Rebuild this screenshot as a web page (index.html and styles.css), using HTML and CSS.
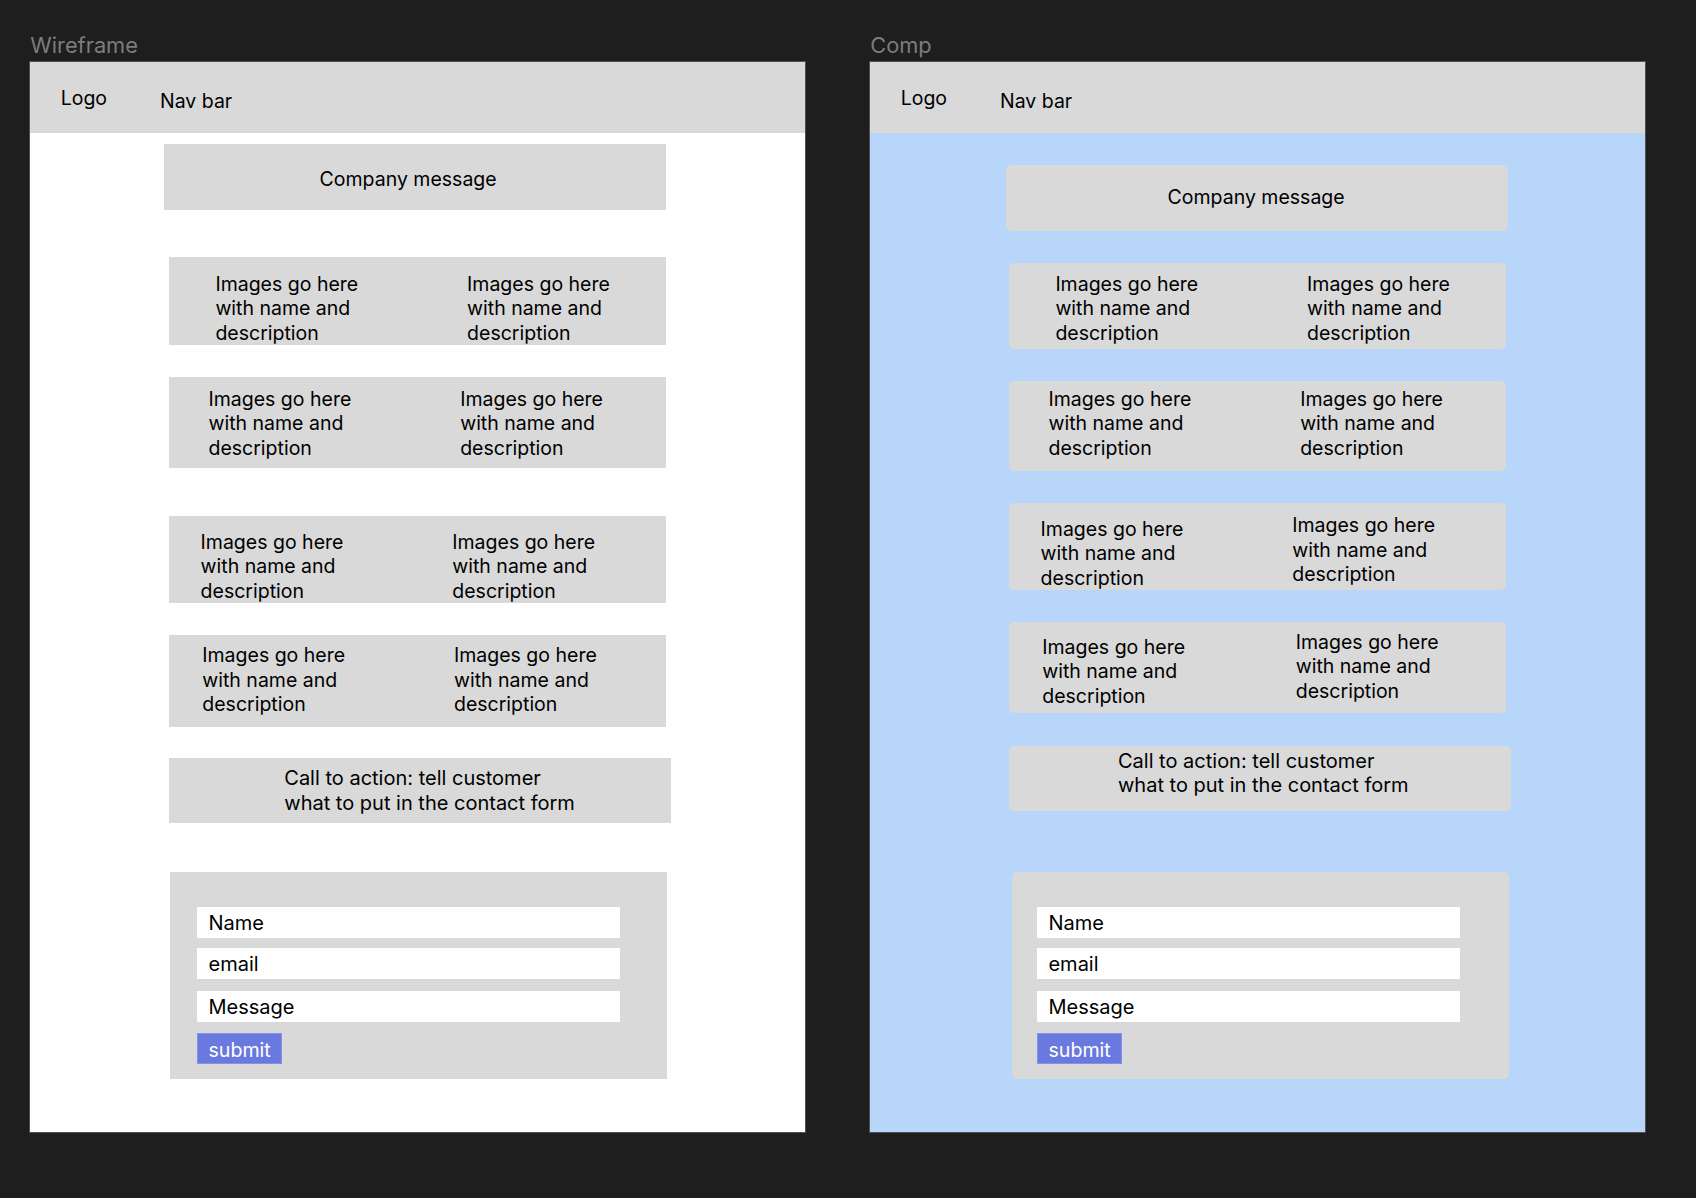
FILE: index.html
```html
<!DOCTYPE html>
<html lang="en">
<head>
<meta charset="utf-8">
<title>Wireframe and Comp</title>
<link rel="stylesheet" href="styles.css">
</head>
<body>
<div class="canvas">
  <section class="board">
    <div class="board-label">Wireframe</div>
    <div class="frame frame--wire">
      <header class="topbar"><span class="logo">Logo</span><span class="nav">Nav bar</span></header>
      <div class="content">
        <div class="block hero w-hero">Company message</div>
        <div class="block row w-r1"><div class="cell">Images go here<br>with name and<br>description</div><div class="cell">Images go here<br>with name and<br>description</div></div>
        <div class="block row w-r2"><div class="cell">Images go here<br>with name and<br>description</div><div class="cell">Images go here<br>with name and<br>description</div></div>
        <div class="block row w-r3"><div class="cell">Images go here<br>with name and<br>description</div><div class="cell">Images go here<br>with name and<br>description</div></div>
        <div class="block row w-r4"><div class="cell">Images go here<br>with name and<br>description</div><div class="cell">Images go here<br>with name and<br>description</div></div>
        <div class="block cta w-cta">Call to action: tell customer<br>what to put in the contact form</div>
        <div class="block form w-form">
          <div class="field">Name</div>
          <div class="field f-email">email</div>
          <div class="field f-msg">Message</div>
          <div class="submit">submit</div>
        </div>
      </div>
    </div>
  </section>
  <section class="board">
    <div class="board-label">Comp</div>
    <div class="frame frame--comp">
      <header class="topbar"><span class="logo">Logo</span><span class="nav">Nav bar</span></header>
      <div class="content">
        <div class="block rounded hero c-hero">Company message</div>
        <div class="block rounded row c-r1"><div class="cell">Images go here<br>with name and<br>description</div><div class="cell">Images go here<br>with name and<br>description</div></div>
        <div class="block rounded row c-r2"><div class="cell">Images go here<br>with name and<br>description</div><div class="cell">Images go here<br>with name and<br>description</div></div>
        <div class="block rounded row c-r3"><div class="cell">Images go here<br>with name and<br>description</div><div class="cell cell--up3">Images go here<br>with name and<br>description</div></div>
        <div class="block rounded row c-r4"><div class="cell">Images go here<br>with name and<br>description</div><div class="cell cell--up5">Images go here<br>with name and<br>description</div></div>
        <div class="block rounded cta c-cta">Call to action: tell customer<br>what to put in the contact form</div>
        <div class="block rounded form c-form">
          <div class="field">Name</div>
          <div class="field f-email">email</div>
          <div class="field f-msg">Message</div>
          <div class="submit">submit</div>
        </div>
      </div>
    </div>
  </section>
</div>
</body>
</html>
```
FILE: styles.css
```css
html, body {
  margin: 0;
  padding: 0;
  background: #1e1e1e;
}
body {
  font-family: Inter, "Noto Sans", "Liberation Sans", sans-serif;
  color: #000;
  width: 1696px;
  height: 1198px;
  overflow: hidden;
}
.canvas {
  display: flex;
  gap: 65.7px;
  padding: 32px 0 0 30.3px;
}
.board {
  display: flex;
  flex-direction: column;
}
.board-label {
  font-size: 21.8px;
  line-height: 26px;
  color: #7c7c7c;
  margin-bottom: 3.5px;
}
.frame {
  width: 774.3px;
  height: 1070.7px;
  box-shadow: 0 0 0 1px #505050;
  display: flex;
  flex-direction: column;
}
.frame--wire { background: #ffffff; }
.frame--comp { background: #b8d6fa; }

.topbar {
  height: 71px;
  box-sizing: border-box;
  background: #d9d9d9;
  display: flex;
  align-items: flex-start;
  padding: 24px 0 0 30.4px;
  font-size: 19.5px;
  line-height: 24px;
  flex: none;
}
.logo { width: 99.3px; }
.nav { margin-top: 3.4px; }

.content {
  display: flex;
  flex-direction: column;
  align-items: flex-start;
}
.block {
  background: #d9d9d9;
  box-sizing: border-box;
  font-size: 19.5px;
  line-height: 24.5px;
  flex: none;
}
.rounded { border-radius: 5px; }

.hero { width: 502px; height: 65.7px; }
.row {
  width: 497.2px;
  display: grid;
  grid-template-columns: 251.7px auto;
  align-items: start;
}
.cell { white-space: nowrap; }
.cell--up3 { margin-top: -3.4px; }
.cell--up5 { margin-top: -5px; }
.cta { width: 502.1px; height: 65px; font-size: 20px; }

.form {
  width: 497.2px;
  height: 207px;
  padding-top: 34.4px;
  display: flex;
  flex-direction: column;
  align-items: flex-start;
}
.field {
  width: 423.2px;
  height: 31px;
  box-sizing: border-box;
  background: #ffffff;
  font-size: 20px;
  line-height: 33px;
  padding-left: 11.7px;
}
.f-email { margin-top: 10px; }
.f-msg { margin-top: 12px; }
.submit {
  margin-top: 11.6px;
  width: 85.4px;
  height: 31px;
  box-sizing: border-box;
  background: #6979e0;
  border: 1px solid #8391e6;
  color: #ffffff;
  font-size: 19.6px;
  line-height: 32px;
  padding-left: 10.7px;
}

/* Wireframe placements */
.w-hero { margin: 11.7px 0 0 133.7px; padding: 22.6px 0 0 155.6px; }
.w-r1 { margin: 47.6px 0 0 138.3px; height: 87.4px; padding: 14.2px 0 0 46.8px; }
.w-r2 { margin: 32.6px 0 0 138.3px; height: 91px; padding: 9.2px 0 0 39.9px; }
.w-r3 { margin: 47.7px 0 0 138.3px; height: 87.3px; padding: 13.8px 0 0 32px; }
.w-r4 { margin: 31.7px 0 0 138.3px; height: 91.7px; padding: 8.1px 0 0 33.7px; }
.w-cta { margin: 31.6px 0 0 138.3px; padding: 8px 0 0 115.7px; }
.w-form { margin: 49px 0 0 140px; padding-left: 26.5px; }

/* Comp placements */
.c-hero { margin: 32.7px 0 0 135.3px; height: 66px; padding: 19.9px 0 0 162px; }
.c-r1 { margin: 31.7px 0 0 138.3px; height: 86.6px; padding: 8.8px 0 0 46.8px; }
.c-r2 { margin: 31.7px 0 0 138.3px; height: 90.3px; padding: 5.5px 0 0 39.9px; }
.c-r3 { margin: 32px 0 0 138.3px; height: 86.7px; padding: 13.2px 0 0 32px; }
.c-r4 { margin: 31.7px 0 0 138.3px; height: 91.6px; padding: 13.1px 0 0 33.7px; }
.c-r4 { grid-template-columns: 253.5px auto; }
.c-cta { margin: 32.4px 0 0 138.3px; padding: 2.9px 0 0 109.4px; }
.c-form { margin: 61.6px 0 0 141.7px; padding-left: 24.8px; }
```
